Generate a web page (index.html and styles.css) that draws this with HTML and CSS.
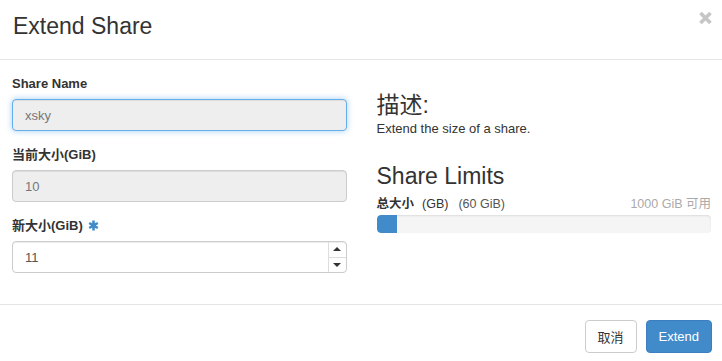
FILE: index.html
```html
<!DOCTYPE html>
<html lang="zh">
<head>
  <meta charset="UTF-8" />
  <meta name="viewport" content="width=device-width, initial-scale=1.0" />
  <title>Extend Share</title>
  <link rel="stylesheet" href="styles.css">
</head>
<body>
  <div class="modal">
    <header class="modal-header">
      <h4 class="modal-title">Extend Share</h4>
      <button type="button" class="close" aria-label="Close">
        <svg width="15" height="14" viewBox="0 0 15 14">
          <path d="M2.5 2 L12.5 12 M12.5 2 L2.5 12" stroke="#c6c6c6" stroke-width="3.6" />
        </svg>
      </button>
    </header>

    <div class="modal-body">
      <!-- left: form -->
      <div class="col">
        <div class="form-group">
          <label for="name">Share Name</label>
          <input type="text" id="name" class="form-control focused" value="xsky" readonly />
        </div>
        <div class="form-group">
          <label for="size">当前大小(GiB)</label>
          <input type="text" id="size" class="form-control" value="10" disabled />
        </div>
        <div class="form-group">
          <label for="new_size">新大小(GiB)
            <svg class="required" width="11" height="11" viewBox="0 0 11 11">
              <path d="M5.5 0.5 V10.5 M1.2 3 L9.8 8 M9.8 3 L1.2 8" stroke="#428bca" stroke-width="2.6" />
            </svg>
          </label>
          <div class="number-input">
            <span class="number-value">11</span>
            <div class="spinner">
              <span class="spin up"></span>
              <span class="spin down"></span>
            </div>
          </div>
        </div>
      </div>

      <!-- right: help -->
      <div class="col">
        <h3>描述:</h3>
        <p>Extend the size of a share.</p>
        <h3 class="limits-title">Share Limits</h3>
        <div class="quota-row">
          <span><b>总大小</b><span class="unit">(GB)</span><span class="used">(60 GiB)</span></span>
          <span class="available">1000 GiB 可用</span>
        </div>
        <div class="progress">
          <div class="progress-bar" style="width: 6%"></div>
        </div>
      </div>
    </div>

    <footer class="modal-footer">
      <button type="button" class="btn btn-default">取消</button>
      <button type="button" class="btn btn-primary">Extend</button>
    </footer>
  </div>
</body>
</html>
```

FILE: styles.css
```css
* {
  box-sizing: border-box;
}

body {
  font-family: "Liberation Sans", "Noto Sans CJK SC", sans-serif;
  margin: 0;
  padding: 0;
  background-color: #fff;
  color: #333;
  font-size: 13px;
}

.modal {
  width: 722px;
  background: #fff;
}

.modal-header {
  height: 60px;
  border-bottom: 1px solid #e5e5e5;
  display: flex;
  justify-content: space-between;
  align-items: flex-start;
  padding: 0 9px 0 13px;
}

.modal-title {
  margin: 13px 0 0;
  font-size: 23px;
  font-weight: normal;
  color: #333;
  line-height: 26px;
}

.close {
  background: none;
  border: none;
  padding: 0;
  margin-top: 11px;
  cursor: pointer;
  line-height: 0;
}

.modal-body {
  display: grid;
  grid-template-columns: 1fr 1fr;
  column-gap: 30px;
  padding: 15px 11px 14px 12px;
  height: 244px;
}

.form-group {
  margin-bottom: 15px;
}

label {
  display: block;
  font-weight: bold;
  line-height: 18px;
  margin-bottom: 6px;
  color: #333;
}

.required {
  vertical-align: -1px;
  margin-left: 2px;
}

.form-control {
  display: block;
  width: 100%;
  height: 32px;
  padding: 6px 12px;
  font-family: inherit;
  font-size: 13px;
  color: #777;
  background-color: #eee;
  border: 1px solid #ccc;
  border-radius: 4px;
  box-shadow: inset 0 1px 1px rgba(0, 0, 0, 0.075);
}

.form-control.focused {
  border-color: #66afe9;
  outline: 0;
  box-shadow: inset 0 1px 1px rgba(0, 0, 0, 0.075), 0 0 6px rgba(102, 175, 233, 0.6);
}

.number-input {
  display: flex;
  align-items: center;
  height: 32px;
  border: 1px solid #ccc;
  border-radius: 4px;
  background: #fff;
  box-shadow: inset 0 1px 1px rgba(0, 0, 0, 0.075);
  padding: 0 0 0 12px;
}

.number-value {
  flex: 1;
  color: #555;
}

.spinner {
  display: flex;
  flex-direction: column;
  width: 18px;
  height: 30px;
  border-left: 1px solid #ddd;
}

.spin {
  flex: 1;
  display: flex;
  align-items: center;
  justify-content: center;
}

.spin.up {
  border-bottom: 1px solid #ddd;
}

.spin.up::before {
  content: "";
  border-left: 4px solid transparent;
  border-right: 4px solid transparent;
  border-bottom: 4px solid #333;
}

.spin.down::before {
  content: "";
  border-left: 4px solid transparent;
  border-right: 4px solid transparent;
  border-top: 4px solid #333;
}

h3 {
  font-size: 23px;
  font-weight: normal;
  line-height: 24px;
  margin: 18px 0 3px;
  color: #333;
}

p {
  margin: 3px 0 0;
  font-size: 13px;
  line-height: 17px;
}

.limits-title {
  margin-top: 27px;
}

.quota-row {
  display: flex;
  justify-content: space-between;
  font-size: 12.5px;
  line-height: 17px;
  margin-top: 8px;
}

.unit {
  margin-left: 8px;
}

.used {
  margin-left: 10px;
  color: #555;
}

.available {
  color: #aaa;
}

.progress {
  height: 18px;
  margin-top: 2px;
  background-color: #f5f5f5;
  border-radius: 4px;
  overflow: hidden;
  box-shadow: inset 0 1px 2px rgba(0, 0, 0, 0.1);
}

.progress-bar {
  height: 100%;
  background-color: #428bca;
  border-radius: 4px 0 0 4px;
}

.modal-footer {
  border-top: 1px solid #e5e5e5;
  display: flex;
  justify-content: flex-end;
  gap: 9px;
  padding: 15px 10px 0 0;
}

.btn {
  height: 33px;
  padding: 0 12px;
  font-family: inherit;
  font-size: 13px;
  border-radius: 4px;
  border: 1px solid #ccc;
  cursor: pointer;
}

.btn-default {
  background: #fff;
  color: #333;
}

.btn-primary {
  background: #428bca;
  border-color: #3b7fc0;
  color: #fff;
}
```
